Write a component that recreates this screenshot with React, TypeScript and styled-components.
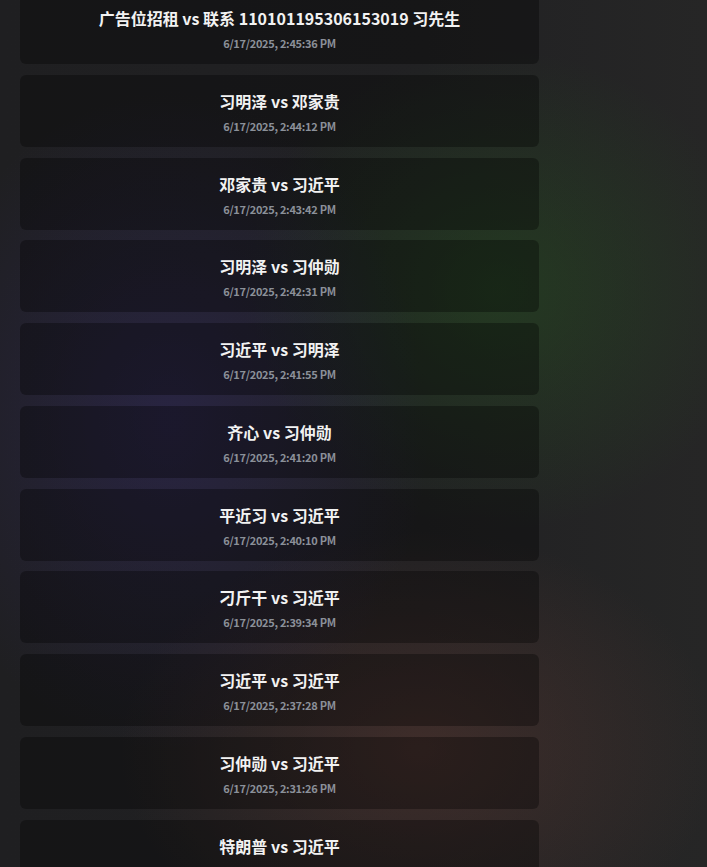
import React from "react";
import styled, { createGlobalStyle } from "styled-components";

const GlobalStyle = createGlobalStyle`
  html, body {
    margin: 0;
    padding: 0;
    height: 100%;
    overflow: hidden;
  }
  body {
    background-color: #232323;
    background-image:
      radial-gradient(ellipse 260px 330px at 170px 420px, rgba(52, 42, 110, 0.42), rgba(52, 42, 110, 0) 100%),
      radial-gradient(ellipse 260px 240px at 500px 290px, rgba(38, 92, 30, 0.40), rgba(38, 92, 30, 0) 100%),
      radial-gradient(ellipse 300px 220px at 420px 750px, rgba(105, 62, 52, 0.42), rgba(105, 62, 52, 0) 100%),
      linear-gradient(90deg, #1f1f21 0%, #212123 60%, #262626 100%);
    font-family: "Noto Sans CJK SC", "Noto Sans", sans-serif;
  }
`;

const Page = styled.div`
  width: 707px;
  height: 867px;
  overflow: hidden;
`;

const List = styled.div`
  display: flex;
  flex-direction: column;
  gap: 10.78px;
  width: 519px;
  margin: -8px 0 0 20px;
`;

const Card = styled.div`
  height: 72px;
  flex-shrink: 0;
  box-sizing: border-box;
  padding-top: 14px;
  border-radius: 6px;
  background: rgba(0, 0, 0, 0.32);
  display: flex;
  flex-direction: column;
  align-items: center;
`;

const Title = styled.div`
  font-size: 16px;
  line-height: 24px;
  font-weight: 700;
  color: #f2f2f2;
  white-space: nowrap;
`;

const Time = styled.div`
  margin-top: 5px;
  font-size: 11px;
  line-height: 16px;
  font-weight: 700;
  letter-spacing: -0.3px;
  color: #8b9099;
  white-space: nowrap;
`;

const items: [string, string][] = [
  ["广告位招租 vs 联系 110101195306153019 习先生", "6/17/2025, 2:45:36 PM"],
  ["习明泽 vs 邓家贵", "6/17/2025, 2:44:12 PM"],
  ["邓家贵 vs 习近平", "6/17/2025, 2:43:42 PM"],
  ["习明泽 vs 习仲勋", "6/17/2025, 2:42:31 PM"],
  ["习近平 vs 习明泽", "6/17/2025, 2:41:55 PM"],
  ["齐心 vs 习仲勋", "6/17/2025, 2:41:20 PM"],
  ["平近习 vs 习近平", "6/17/2025, 2:40:10 PM"],
  ["刁斤干 vs 习近平", "6/17/2025, 2:39:34 PM"],
  ["习近平 vs 习近平", "6/17/2025, 2:37:28 PM"],
  ["习仲勋 vs 习近平", "6/17/2025, 2:31:26 PM"],
  ["特朗普 vs 习近平", "6/17/2025, 2:30:02 PM"],
];

export default function App() {
  return (
    <>
      <GlobalStyle />
      <Page>
        <List>
          {items.map(([title, time], i) => (
            <Card key={i}>
              <Title>{title}</Title>
              <Time>{time}</Time>
            </Card>
          ))}
        </List>
      </Page>
    </>
  );
}
